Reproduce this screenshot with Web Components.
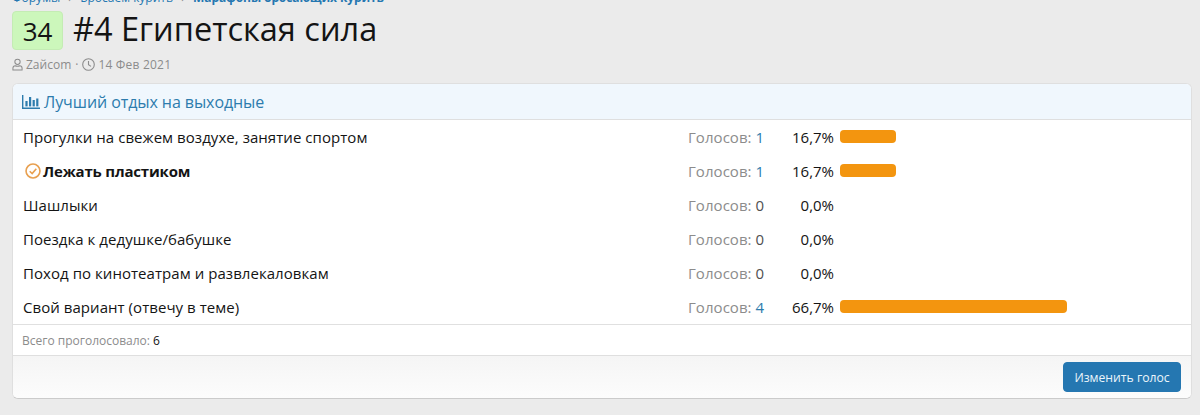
<!DOCTYPE html>
<html>
<head>
<meta charset="utf-8">
<style>
  html, body { margin: 0; height: 415px; overflow: hidden; background: #ebebeb; }
  body { font-family: "Open Sans", "Noto Sans", sans-serif; color: #141414; }
</style>
</head>
<body>
<thread-page>
  <thread-header replies="34" title-text="#4 Египетская сила" author="Zaйcom" date="14 Фев 2021"></thread-header>
  <poll-block heading="Лучший отдых на выходные" total="6" action="Изменить голос">
    <poll-row label="Прогулки на свежем воздухе, занятие спортом" votes="1" percent="16,7%" bar="56"></poll-row>
    <poll-row label="Лежать пластиком" votes="1" percent="16,7%" bar="56" mine></poll-row>
    <poll-row label="Шашлыки" votes="0" percent="0,0%" bar="0"></poll-row>
    <poll-row label="Поездка к дедушке/бабушке" votes="0" percent="0,0%" bar="0"></poll-row>
    <poll-row label="Поход по кинотеатрам и развлекаловкам" votes="0" percent="0,0%" bar="0"></poll-row>
    <poll-row label="Свой вариант (отвечу в теме)" votes="4" percent="66,7%" bar="227"></poll-row>
  </poll-block>
</thread-page>

<script>
(function() {
  class ThreadPage extends HTMLElement {
    constructor() {
      super();
      this.attachShadow({ mode: 'open' }).innerHTML = `
        <style>
          :host { display: block; padding: 0 8px 0 12px; height: 415px; overflow: hidden; box-sizing: border-box; }
          nav {
            margin-top: -12px; margin-bottom: 3px; height: 20px; line-height: 20px; font-size: 12px;
            color: #2577b1; white-space: nowrap; display: flex;
          }
          nav b { font-weight: 700; letter-spacing: -0.1px; }
          nav i { font-style: normal; color: #8c8c8c; width: 20px; text-align: center; }
        </style>
        <nav><span>Форумы</span><i>›</i><span>Бросаем курить</span><i>›</i><b>Марафоны бросающих курить</b></nav>
        <slot></slot>`;
    }
  }

  class ThreadHeader extends HTMLElement {
    connectedCallback() {
      const a = n => this.getAttribute(n);
      this.attachShadow({ mode: 'open' }).innerHTML = `
        <style>
          :host { display: block; }
          .top { display: flex; align-items: center; gap: 10px; height: 39px; }
          .count {
            width: 49px; height: 37px; border: 1px solid #c4ecb4; border-radius: 4px;
            background: #ccf7bb; font-size: 26px; text-align: center; line-height: 38px;
          }
          h1 { margin: 0; padding-bottom: 3px; font-size: 32.5px; font-weight: 400; line-height: 36px; white-space: nowrap; }
          .meta {
            display: flex; align-items: center; margin-top: 5px; height: 18px;
            font-size: 12px; color: #8c8c8c;
          }
          .author { margin-left: 3px; }
          .dot { margin: 0 4px; }
          .date { margin-left: 3px; letter-spacing: 0.2px; }
          svg { display: block; }
        </style>
        <div class="top"><div class="count">${a('replies')}</div><h1>${a('title-text')}</h1></div>
        <div class="meta">
          <svg width="11" height="13" viewBox="0 0 12 13" fill="none" stroke="#8c8c8c" stroke-width="1.1">
            <circle cx="6" cy="3.6" r="2.9"/>
            <path d="M1 12.4V10.6C1 8.8 2.4 7.9 3.6 7.9C4.4 8.3 5.2 8.4 6 8.4S7.6 8.3 8.4 7.9C9.6 7.9 11 8.8 11 10.6V12.4Z"/>
          </svg>
          <span class="author">${a('author')}</span><span class="dot">·</span>
          <svg width="13" height="13" viewBox="0 0 13 13" fill="none" stroke="#8c8c8c" stroke-width="1.1">
            <circle cx="6.5" cy="6.5" r="5.8"/><path d="M6.5 3V6.8L9 8.4"/>
          </svg>
          <span class="date">${a('date')}</span>
        </div>`;
    }
  }

  class PollBlock extends HTMLElement {
    connectedCallback() {
      const a = n => this.getAttribute(n);
      this.attachShadow({ mode: 'open' }).innerHTML = `
        <style>
          :host {
            display: block; margin-top: 10px; background: #fff; border: 1px solid #dfdfdf;
            border-bottom-color: #cbcbcb; border-radius: 6px; overflow: hidden;
          }
          .head {
            display: flex; align-items: center; gap: 4px; height: 36px; padding: 1px 9px 0;
            box-sizing: border-box; background: #f0f7fd; border-bottom: 1px solid #dfdfdf;
            font-size: 16px; letter-spacing: -0.08px; color: #2d7cad;
          }
          .total {
            border-top: 1px solid #e0e0e0; height: 30px; line-height: 31px; padding: 0 9px;
            font-size: 12px; color: #8c8c8c;
          }
          .total b { font-weight: 400; color: #141414; }
          .foot {
            display: flex; justify-content: flex-end; align-items: flex-start; height: 43px;
            padding: 6px 10px 0; box-sizing: border-box; border-top: 1px solid #dfdfdf;
            background: linear-gradient(#f5f5f5, #fcfcfc);
          }
          button {
            width: 118px; height: 30px; border: 1px solid #2577b1; border-radius: 4px; padding: 0;
            background: #2577b1; color: #ebf5fb; font: 400 12.2px "Open Sans", "Noto Sans", sans-serif;
          }
        </style>
        <div class="head">
          <svg width="18" height="14" viewBox="0 0 18 14" fill="#2d7cad">
            <path d="M0 0H1.4V12.6H18V14H0Z"/><rect x="3.4" y="6" width="2.2" height="5.4"/>
            <rect x="7" y="2" width="2.2" height="9.4"/><rect x="10.6" y="5" width="2.2" height="6.4"/>
            <rect x="14.2" y="3.5" width="2.2" height="7.9"/>
          </svg>
          <span>${a('heading')}</span>
        </div>
        <slot></slot>
        <div class="total">Всего проголосовало: <b>${a('total')}</b></div>
        <div class="foot"><button>${a('action')}</button></div>`;
    }
  }

  class PollRow extends HTMLElement {
    connectedCallback() {
      const a = n => this.getAttribute(n);
      const votes = a('votes');
      const mine = this.hasAttribute('mine');
      const check = mine ? `
        <svg width="16" height="16" viewBox="0 0 17 17" fill="none" stroke="#e8a050" stroke-width="1.7">
          <circle cx="8.5" cy="8.5" r="7.4"/><path d="M5 8.8L7.6 11.2L12 6" stroke-width="1.7"/>
        </svg>` : '';
      this.attachShadow({ mode: 'open' }).innerHTML = `
        <style>
          :host { display: flex; align-items: center; height: 34px; font-size: 15px; }
          .label { display: flex; align-items: center; gap: 2px; width: 675px; padding-left: 10px; box-sizing: border-box; white-space: nowrap; letter-spacing: 0.05px; }
          .label.mine { padding-left: 12px; font-weight: 700; letter-spacing: -0.18px; }
          .votes { width: 92px; color: #8c8c8c; white-space: nowrap; letter-spacing: 0.05px; }
          .votes span { color: ${votes === '0' ? '#505050' : '#2d7cad'}; }
          .pct { width: 54px; text-align: right; white-space: nowrap; }
          .track { width: 340px; margin-left: 6px; margin-top: -1px; }
          .bar { height: 13px; border-radius: 4px; background: #f3950f; }
        </style>
        <div class="label${mine ? ' mine' : ''}">${check}<span>${a('label')}</span></div>
        <div class="votes">Голосов: <span>${votes}</span></div>
        <div class="pct">${a('percent')}</div>
        <div class="track">${+a('bar') > 0 ? `<div class="bar" style="width:${a('bar')}px"></div>` : ''}</div>`;
    }
  }

  customElements.define('thread-page', ThreadPage);
  customElements.define('thread-header', ThreadHeader);
  customElements.define('poll-block', PollBlock);
  customElements.define('poll-row', PollRow);
})();
</script>
</body>
</html>
